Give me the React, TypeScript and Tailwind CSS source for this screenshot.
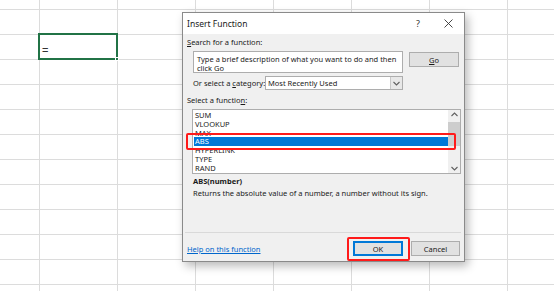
import React from "react";

const ROWS = 12;
const COLS = 8;

function Chevron({ up }: { up?: boolean }) {
  return (
    <svg width="7" height="5" viewBox="0 0 7 5" className="block">
      <path
        d={up ? "M0.5 4 L3.5 1 L6.5 4" : "M0.5 1 L3.5 4 L6.5 1"}
        fill="none"
        stroke="#606060"
        strokeWidth="1.1"
      />
    </svg>
  );
}

export default function App() {
  const cells: React.ReactNode[] = [];
  for (let r = 0; r < ROWS + 1; r++) {
    for (let c = 0; c < COLS; c++) {
      cells.push(
        <div key={`${r}-${c}`} className="border-r border-b border-[#dcdcdc]" />
      );
    }
  }
  const items = ["SUM", "VLOOKUP", "MAX", "ABS", "HYPERLINK", "TYPE", "RAND"];
  return (
    <div
      className="relative w-[554px] h-[291px] overflow-hidden bg-white text-[#1a1a1a]"
      style={{ fontFamily: '"Noto Sans", "Open Sans", sans-serif' }}
    >
      {/* spreadsheet grid */}
      <div className="grid grid-cols-[40px_repeat(7,78px)] grid-rows-[10px_repeat(12,25px)]">
        {cells}
      </div>

      {/* active cell */}
      <div className="absolute left-[38px] top-[33px] w-[80px] h-[27px] border-2 border-[#217346]">
        <span
          className="absolute left-[2px] top-[10px] text-[11px] leading-[11px] text-[#333]"
          style={{ fontFamily: '"Liberation Sans", sans-serif' }}
        >
          =
        </span>
        <div className="absolute right-[-3px] bottom-[-3px] w-[4px] h-[4px] bg-[#217346] border border-white" />
      </div>

      {/* dialog */}
      <div className="absolute left-[182px] top-[12px] w-[283px] h-[250px] border border-[#8a8a8a] flex flex-col shadow-[3px_4px_9px_rgba(0,0,0,0.28)]">
        <div className="h-[21px] bg-white flex items-center pl-[4px] pr-[11px]">
          <span className="text-[8.5px] leading-[10px]">Insert Function</span>
          <span className="ml-auto w-[10px] text-center text-[9px] leading-[10px] text-[#333]">?</span>
          <svg width="9" height="9" viewBox="0 0 9 9" className="ml-[21px]">
            <path d="M0.5 0.5 L8.5 8.5 M8.5 0.5 L0.5 8.5" stroke="#333" strokeWidth="0.9" />
          </svg>
        </div>
        <div className="flex-1 flex flex-col bg-[#f0f0f0] text-[7.5px] whitespace-nowrap">
          <div className="mt-[3px] h-[10px] leading-[10px] pl-[4px]">
            <span className="underline">S</span>earch for a function:
          </div>
          <div className="mt-[4px] flex pl-[10px]">
            <div className="w-[210px] h-[22px] bg-white border border-[#adadad] pl-[3px] pt-[3px] leading-[9px] overflow-hidden">
              <div>Type a brief description of what you want to do and then</div>
              <div>click Go</div>
            </div>
            <div className="ml-[6px] mt-[1px] w-[50px] h-[15px] bg-[#e1e1e1] border border-[#adadad] flex items-center justify-center leading-[10px]">
              <span className="underline">G</span>o
            </div>
          </div>
          <div className="mt-[3px] h-[14px] flex items-center pl-[10px]">
            <span className="w-[72px] leading-[10px]">
              Or select a <span className="underline">c</span>ategory:
            </span>
            <div className="w-[138px] h-[14px] bg-white border border-[#adadad] flex items-center">
              <span className="pl-[2px] leading-[10px] flex-1">Most Recently Used</span>
              <div className="w-[12px] h-full bg-[#e8e8e8] border-l border-[#c8c8c8] flex items-center justify-center">
                <Chevron />
              </div>
            </div>
          </div>
          <div className="mt-[5px] h-[10px] leading-[10px] pl-[4px]">
            Select a functio<span className="underline">n</span>:
          </div>
          <div className="mt-[4px] ml-[9px] w-[269px] h-[65px] bg-white border border-[#adadad] flex">
            <div className="flex-1 pt-[1px] pl-[1px]">
              {items.map((it) => (
                <div
                  key={it}
                  className={
                    it === "ABS"
                      ? "h-[8.8px] leading-[8.8px] pl-[1px] bg-[#0078d7] text-white"
                      : "h-[8.8px] leading-[8.8px] pl-[1px]"
                  }
                >
                  {it}
                </div>
              ))}
            </div>
            <div className="w-[12px] bg-[#f0f0f0] flex flex-col items-center">
              <div className="h-[8px] flex items-center">
                <Chevron up />
              </div>
              <div className="mt-[4px] w-full h-[24px] bg-[#cdcdcd]" />
              <div className="flex-1" />
              <div className="h-[9px] flex items-center">
                <Chevron />
              </div>
            </div>
          </div>
          <div className="mt-[2px] h-[10px] leading-[10px] pl-[10px] font-bold">ABS(number)</div>
          <div className="mt-[2px] h-[10px] leading-[10px] pl-[10px]">
            Returns the absolute value of a number, a number without its sign.
          </div>
          <div className="flex-1" />
          <div className="ml-[2px] w-[276px] h-px bg-[#d9d9d9]" />
          <div className="mt-[8px] h-[15px] flex items-center pl-[4px] pr-[4px] mb-[5px]">
            <span className="text-[#0066cc] underline leading-[10px]">Help on this function</span>
            <div className="ml-auto w-[50px] h-[15px] bg-[#e1e1e1] border-2 border-[#0078d7] flex items-center justify-center leading-[10px]">
              OK
            </div>
            <div className="ml-[8px] w-[49px] h-[15px] bg-[#e1e1e1] border border-[#adadad] flex items-center justify-center leading-[10px]">
              Cancel
            </div>
          </div>
        </div>
      </div>

      {/* red annotation boxes */}
      <div className="absolute left-[186px] top-[133px] w-[270px] h-[17px] border-2 border-[#ff1a1a] rounded-[2px]" />
      <div className="absolute left-[347px] top-[237px] w-[63px] h-[24px] border-2 border-[#ff1a1a] rounded-[2px]" />
    </div>
  );
}
